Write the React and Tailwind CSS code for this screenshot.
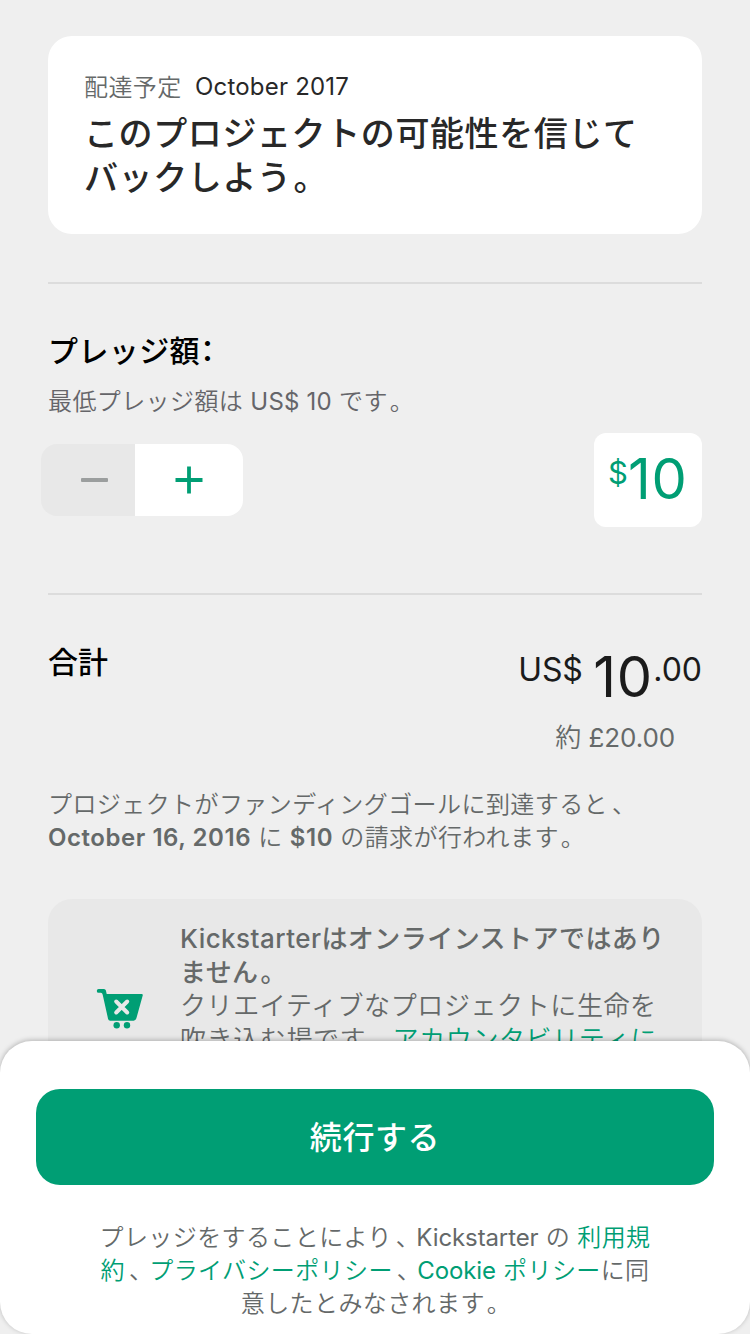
function Divider() {
  return <div className="h-[2px] w-full shrink-0 bg-[#dcdcdc]" />;
}

// Japanese comma and full stop, set slightly right inside their full-width cells.
function Comma() {
  return <span className="ml-1 tracking-[-3.6px]">、</span>;
}

function Stop() {
  return <span className="ml-[2px] tracking-[-1.6px]">。</span>;
}

function CartIcon() {
  return (
    <svg width="48" height="42" viewBox="0 0 48 42" className="block">
      <path
        d="M2.600 1H8Q9.500 1 9.900 2.500L10.700 6H45.600Q47.200 6 46.700 7.600L40.300 30.600Q39.700 32.700 37.600 32.700H14.200Q12.500 32.700 12.100 31L6.700 6.800Q6.300 5 4.900 4.800H2.600Q.8 4.800 .8 2.900T2.600 1Z"
        fill="#009e74"
      />
      <path d="M20.200 13.500L31.200 24.500M31.200 13.500L20.200 24.500" stroke="#e8e8e8" strokeWidth="4" strokeLinecap="round" />
      <circle cx="20.700" cy="37.300" r="3.200" fill="#009e74" />
      <circle cx="31" cy="37.300" r="3.200" fill="#009e74" />
    </svg>
  );
}

function RewardCard() {
  return (
    <section className="h-[198px] rounded-[24px] bg-white pt-[34px] pl-9 text-[#282828]">
      <div className="flex h-[34px] items-center text-[24px] leading-[34px] whitespace-nowrap">
        <span className="w-[111px] pt-px font-[350] tracking-[0.4px] text-[#656969]">配達予定</span>
        <span className="tracking-[0.2px]">October 2017</span>
      </div>
      <h1 className="mt-2 text-[34px] leading-[44px] font-medium tracking-[0.6px] whitespace-nowrap">
        <span className="block">このプロジェクトの可能性を信じて</span>
        <span className="block">バックしよう<Stop /></span>
      </h1>
    </section>
  );
}

function Stepper() {
  return (
    <div className="-ml-[7px] flex h-[72px] w-[202px] overflow-hidden rounded-[16px]">
      <button className="flex w-[94px] items-center justify-center bg-[#e8e8e8] pl-[13px]">
        <span className="h-[4px] w-[27px] rounded-[1px] bg-[#9b9e9e]" />
      </button>
      <button className="flex w-[108px] items-center justify-center bg-white">
        <svg width="28" height="28" viewBox="0 0 28 28">
          <path d="M14 .5V27.500M.5 14H27.500" stroke="#009e74" strokeWidth="3.800" />
        </svg>
      </button>
    </div>
  );
}

function PledgeSection() {
  return (
    <section className="h-[309px] pt-[47px]">
      <h2 className="h-10 text-[30px] leading-10 font-medium tracking-[0.4px] whitespace-nowrap text-black">
        プレッジ額<span className="[font-feature-settings:'halt']">：</span>
      </h2>
      <p className="mt-[14px] h-[34px] text-[24px] leading-[34px] font-[350] tracking-[0.4px] whitespace-nowrap text-[#656569]">
        最低プレッジ額は <span className="font-normal tracking-[0.2px]">US$ 10</span> です<Stop />
      </p>
      <div className="mt-[14px] flex h-[94px] items-center justify-between">
        <Stepper />
        <div className="flex h-[94px] w-[108px] items-start rounded-[12px] bg-white pt-[22px] pl-[14px] leading-none text-[#009e74]">
          <span className="mt-[2px] w-[20px] text-[31px]">$</span>
          <span className="text-[56px] leading-[48px] tracking-[0.8px]">10</span>
        </div>
      </div>
    </section>
  );
}

function TotalSection() {
  return (
    <section className="h-[304px] pt-[47px]">
      <div className="flex h-[120px] justify-between">
        <h2 className="h-10 text-[30px] leading-10 font-medium text-black">合計</h2>
        <div className="flex flex-col items-end whitespace-nowrap text-[#1b1b1b]">
          <div className="flex h-[70px] items-start pt-[8px]">
            <span className="w-[75px] text-[32px] leading-[40px] tracking-[-0.1px]">US$</span>
            <span className="w-[60px] pt-[7px] text-[56px] leading-[40px] tracking-[0.8px]">10</span>
            <span className="text-[32px] leading-[40px]">.00</span>
          </div>
          <div className="mt-[8px] pr-[27px] text-[26px] leading-9 font-[350] tracking-[-0.1px] text-[#656969]">
            約 <span className="font-normal">£20.00</span>
          </div>
        </div>
      </div>
      <p className="mt-[26px] text-[24px] leading-[33px] font-[350] tracking-[0.42px] whitespace-nowrap text-[#656969]">
        <span className="block">プロジェクトがファンディングゴールに到達すると<Comma /></span>
        <span className="block">
          <b className="font-semibold tracking-[0.55px]">October 16, 2016</b> に{" "}
          <b className="font-semibold tracking-[0.55px]">$10</b> の請求が行われます<Stop />
        </span>
      </p>
    </section>
  );
}

function Notice() {
  return (
    <aside className="flex h-[230px] rounded-[24px] bg-[#e8e8e8] pt-[23px] pl-12">
      <div className="w-[84px] pt-[66px]">
        <CartIcon />
      </div>
      <div className="text-[26px] leading-[33.500px] font-[350] tracking-[0.6px] whitespace-nowrap text-[#656969]">
        <span className="block font-medium tracking-[0.45px]">Kickstarterはオンラインストアではあり</span>
        <span className="block font-medium tracking-[0.45px]">ません<Stop /></span>
        <span className="block">クリエイティブなプロジェクトに生命を</span>
        <span className="block">
          吹き込む場です<Stop /><a className="text-[#009e74]">アカウンタビリティに</a>
        </span>
      </div>
    </aside>
  );
}

function BottomSheet() {
  return (
    <footer className="absolute inset-x-0 bottom-0 h-[293px] rounded-[32px] bg-white px-9 pt-12 shadow-[0_-1px_5px_rgba(0,0,0,0.25)]">
      <button className="flex h-24 w-full items-center justify-center rounded-[24px] bg-[#009e74] pt-0.5 text-[32px] font-medium tracking-[0.6px] text-white">
        続行する
      </button>
      <p className="mt-9 text-center text-[24px] leading-[33px] font-[350] tracking-[0.4px] whitespace-nowrap text-[#656969]">
        <span className="block">
          プレッジをすることにより<Comma /><span className="font-normal tracking-[-0.1px]">Kickstarter</span> の{" "}
          <a className="text-[#009e74]">利用規</a>
        </span>
        <span className="block">
          <a className="text-[#009e74]">約</a><Comma />
          <a className="text-[#009e74]">プライバシーポリシー</a><Comma />
          <a className="text-[#009e74]"><span className="font-normal tracking-[-0.1px]">Cookie</span> ポリシー</a>に同
        </span>
        <span className="block">意したとみなされます<Stop /></span>
      </p>
    </footer>
  );
}

export default function App() {
  return (
    <div lang="ja" className="relative h-[1334px] w-[750px] overflow-hidden bg-[#efefef] font-['Inter','Noto_Sans_CJK_JP',sans-serif]">
      <main className="flex flex-col px-12 pt-9">
        <RewardCard />
        <div className="h-12" />
        <Divider />
        <PledgeSection />
        <Divider />
        <TotalSection />
        <Notice />
      </main>
      <BottomSheet />
    </div>
  );
}
